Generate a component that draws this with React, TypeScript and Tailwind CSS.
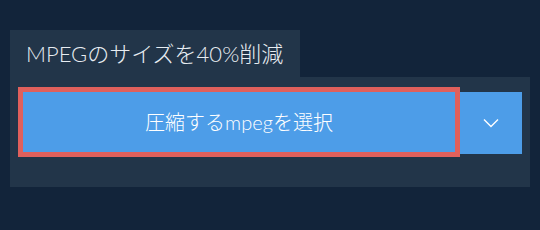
export default function App() {
  return (
    <div
      className="w-[540px] h-[230px] bg-[#12243a] pt-[30px] px-[10px]"
      style={{ fontFamily: "Lato, 'Noto Sans CJK JP', sans-serif" }}
    >
      {/* Tab */}
      <div className="w-[290px] h-[47px] bg-[#223549] flex items-center pl-[16px] text-[22px] font-light text-[#e8edf2]">
        MPEGのサイズを40%削減
      </div>

      {/* Panel */}
      <div className="w-[520px] h-[110px] bg-[#223549] pt-[10px] pl-[8px] flex items-start">
        <button className="w-[442px] h-[70px] border-[5px] border-[#e0605c] bg-[#4d9de8] text-white text-[20px] font-light flex items-center justify-center">
          圧縮するmpegを選択
        </button>
        <button className="mt-[5px] w-[62px] h-[62px] bg-[#4d9de8] flex items-center justify-center">
          <svg width="16" height="10" viewBox="0 0 16 10" fill="none">
            <path d="M1 1.5 L8 8.5 L15 1.5" stroke="white" strokeWidth="1.4" />
          </svg>
        </button>
      </div>
    </div>
  )
}
